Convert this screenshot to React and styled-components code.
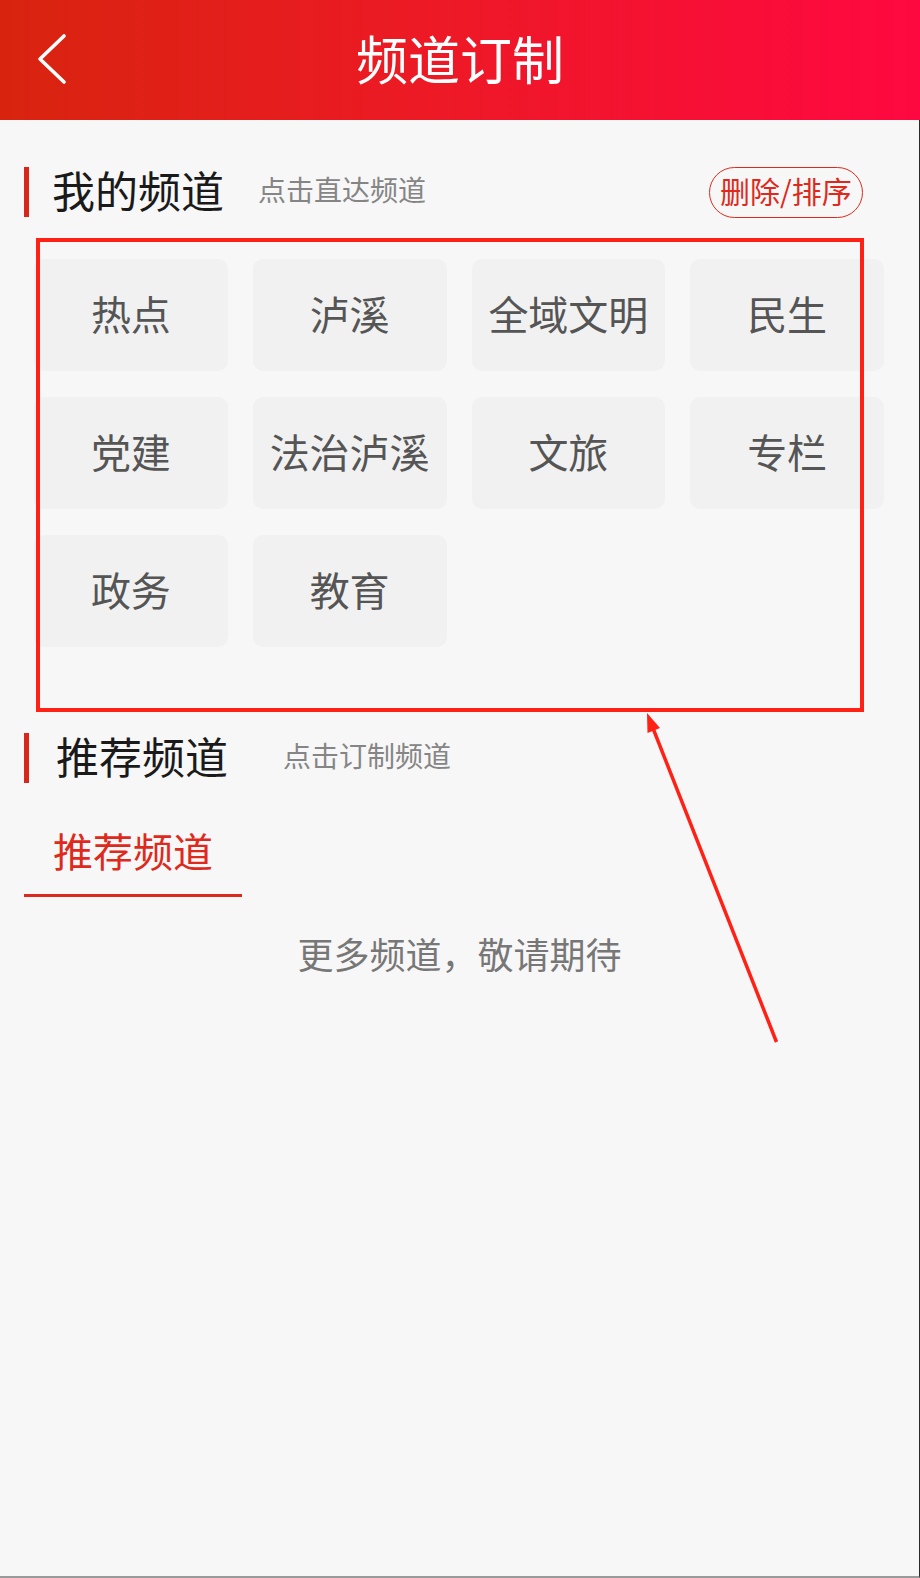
import React from 'react'
import styled, { createGlobalStyle } from 'styled-components'

const GlobalStyle = createGlobalStyle`
  html, body {
    margin: 0;
    padding: 0;
    background: #f7f7f7;
  }
  body {
    font-family: "Noto Sans CJK SC", "Noto Sans", sans-serif;
  }
  * {
    box-sizing: border-box;
  }
`

const Page = styled.div`
  position: relative;
  width: 920px;
  min-height: 1578px;
  background: #f7f7f7;
`

const Header = styled.header`
  height: 120px;
  display: grid;
  grid-template-columns: 1fr auto 1fr;
  align-items: center;
  background: linear-gradient(90deg, #d8240f 0%, #ec1a24 45%, #ff0841 100%);
`

const BackButton = styled.div`
  padding-left: 37px;
  padding-bottom: 3px;
  display: flex;
  align-items: center;
`

const Title = styled.h1`
  margin: 0;
  padding-bottom: 4px;
  font-size: 52px;
  font-weight: 400;
  color: #fff;
  line-height: 1;
`

const Body = styled.main`
  min-height: 1458px;
  padding-top: 47px;
  border-right: 1px solid #2a2a2a;
  border-bottom: 2px solid #9a9a9a;
`

const SectionHead = styled.div`
  display: flex;
  align-items: center;
  height: 50px;
  padding: 0 56px 0 24px;
  margin-top: ${p => p.$top || 0}px;
`

const Bar = styled.span`
  width: 5px;
  height: 50px;
  background: #d9261a;
`

const HeadTitle = styled.span`
  margin-left: ${p => p.$gap}px;
  padding-bottom: 5px;
  font-size: 43px;
  color: #1a1a1a;
  line-height: 1;
`

const HeadSub = styled.span`
  margin-left: ${p => p.$gap}px;
  padding-bottom: 7px;
  font-size: 28px;
  color: #858585;
  line-height: 1;
`

const EditButton = styled.button`
  margin-left: auto;
  width: 154px;
  height: 51px;
  border: 1.5px solid #dd2a1c;
  border-radius: 26px;
  background: transparent;
  color: #dd2a1c;
  font-family: inherit;
  font-size: 30px;
  line-height: 1;
  padding: 0 0 4px;
  display: flex;
  align-items: center;
  justify-content: center;
`

const ChannelGrid = styled.div`
  display: grid;
  grid-template-columns: repeat(4, 1fr);
  grid-auto-rows: 112px;
  column-gap: 25px;
  row-gap: 26px;
  padding: 0 35px 0 34px;
  margin-top: 42px;
`

const Chip = styled.div`
  display: flex;
  align-items: center;
  justify-content: center;
  padding-bottom: 4px;
  border-radius: 10px;
  background: #f1f1f1;
  color: #555;
  font-size: 40px;
  line-height: 1;
`

const Tabs = styled.div`
  display: flex;
  padding-left: 24px;
  margin-top: 39px;
`

const Tab = styled.div`
  width: 218px;
  text-align: center;
  font-size: 40px;
  line-height: 56px;
  padding-bottom: 16px;
  color: ${p => (p.$active ? '#dd2a1c' : '#555')};
  border-bottom: 3px solid ${p => (p.$active ? '#dd2a1c' : 'transparent')};
`

const Empty = styled.p`
  margin: 31px 0 0;
  text-align: center;
  font-size: 36px;
  line-height: 50px;
  color: #777;
`

// annotation drawn over the screenshot
const Marker = styled.div`
  position: absolute;
  left: 36px;
  top: 238px;
  width: 828px;
  height: 474px;
  border: 4px solid #ff2116;
  pointer-events: none;
`

const Arrow = styled.svg`
  position: absolute;
  left: 630px;
  top: 705px;
  pointer-events: none;
`

const channels = ['热点', '泸溪', '全域文明', '民生', '党建', '法治泸溪', '文旅', '专栏', '政务', '教育']

const App = () => {
  return (
    <Page>
      <GlobalStyle />
      <Header>
        <BackButton>
          <svg width="30" height="52" viewBox="0 0 30 52">
            <polyline points="27,3 3,26 27,49" fill="none" stroke="#fff" strokeWidth="3.6" strokeLinecap="round" strokeLinejoin="round" />
          </svg>
        </BackButton>
        <Title>频道订制</Title>
        <div />
      </Header>
      <Body>
        <SectionHead>
          <Bar />
          <HeadTitle $gap={23}>我的频道</HeadTitle>
          <HeadSub $gap={34}>点击直达频道</HeadSub>
          <EditButton>删除/排序</EditButton>
        </SectionHead>
        <ChannelGrid>
          {channels.map(c => (
            <Chip key={c}>{c}</Chip>
          ))}
        </ChannelGrid>
        <SectionHead $top={86}>
          <Bar />
          <HeadTitle $gap={27}>推荐频道</HeadTitle>
          <HeadSub $gap={55}>点击订制频道</HeadSub>
        </SectionHead>
        <Tabs>
          <Tab $active>推荐频道</Tab>
        </Tabs>
        <Empty>更多频道，敬请期待</Empty>
      </Body>
      <Marker />
      <Arrow width="160" height="345" viewBox="0 0 160 345">
        <line x1="146.5" y1="337" x2="22.5" y2="22" stroke="#ff2116" strokeWidth="3.5" />
        <polygon points="17,8 30,23 17.5,28" fill="#ff2116" />
      </Arrow>
    </Page>
  )
}

export default App
